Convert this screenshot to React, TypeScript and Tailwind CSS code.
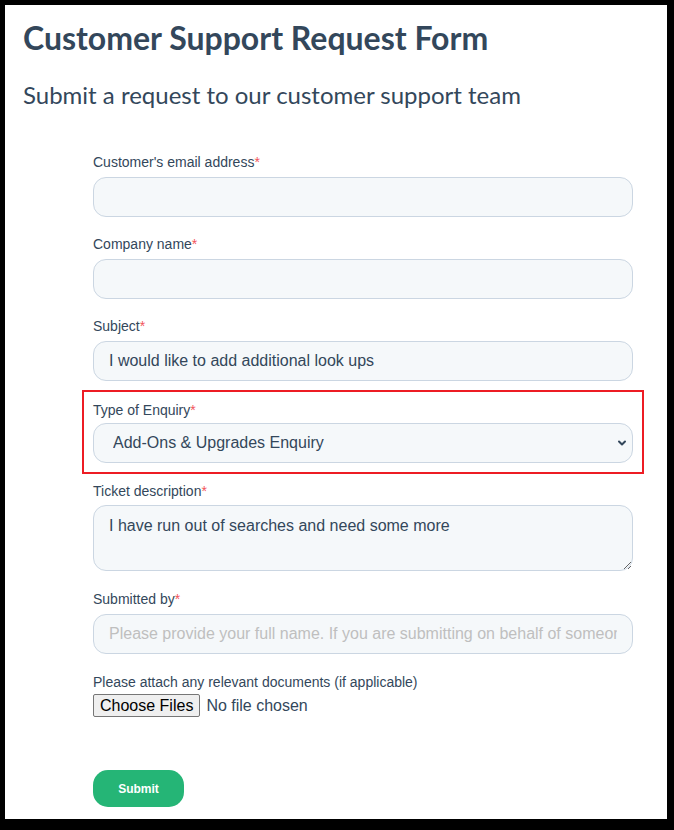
import { ChevronDown } from "lucide-react";

const labelCls = "block text-[14px] leading-[20px] text-[#33475b]";
const inputCls =
  "block w-full h-10 rounded-[13px] border border-[#cbd6e2] bg-[#f5f8fa] px-[15px] text-[16px] text-[#33475b] outline-none placeholder:text-[#bfbfbf]";

function Label({ text, required = true }: { text: string; required?: boolean }) {
  return (
    <label className={labelCls}>
      {text}
      {required && <span className="text-[#f2545b]">*</span>}
    </label>
  );
}

export default function App() {
  return (
    <div
      className="h-[830px] w-[674px] overflow-hidden border-l-[5px] border-t-[5px] border-r-[7px] border-b-[11px] border-black bg-white"
      style={{ fontFamily: '"Liberation Sans", Arial, sans-serif' }}
    >
      {/* Heading */}
      <div className="pl-[18px] pt-[14px] text-[#33475b]" style={{ fontFamily: "Lato, sans-serif" }}>
        <h1 className="text-[32px] font-bold leading-[38px]">Customer Support Request Form</h1>
        <h2 className="mt-[23px] text-[24px] leading-[30px]">Submit a request to our customer support team</h2>
      </div>

      {/* Form */}
      <form className="ml-[88px] mt-[42px] w-[540px]">
        <div className="mb-[17px]">
          <Label text="Customer's email address" />
          <input type="email" className={`${inputCls} mt-[5px]`} />
        </div>

        <div className="mb-[17px]">
          <Label text="Company name" />
          <input type="text" className={`${inputCls} mt-[5px]`} />
        </div>

        <div>
          <Label text="Subject" />
          <input
            type="text"
            defaultValue="I would like to add additional look ups"
            className={`${inputCls} mt-[5px]`}
          />
        </div>

        {/* Highlighted field */}
        <div className="-mx-[11px] mt-[9px] border-2 border-[#ed1c24] px-[9px] pt-[8px] pb-[9px]">
          <Label text="Type of Enquiry" />
          <div className="relative mt-[3px]">
            <select
              defaultValue="addons"
              className={`${inputCls} appearance-none pl-[19px]`}
            >
              <option value="addons">Add-Ons &amp; Upgrades Enquiry</option>
              <option value="billing">Billing Enquiry</option>
              <option value="technical">Technical Support</option>
            </select>
            <ChevronDown
              className="pointer-events-none absolute right-[5px] top-1/2 h-[12px] w-[12px] -translate-y-1/2 text-[#33475b]"
              strokeWidth={4}
            />
          </div>
        </div>

        <div className="mt-[7px] mb-[18px]">
          <Label text="Ticket description" />
          <textarea
            defaultValue="I have run out of searches and need some more"
            className="mt-[4px] block h-[66px] w-full rounded-[13px] border border-[#cbd6e2] bg-[#f5f8fa] px-[15px] pt-[10px] text-[16px] leading-[20px] text-[#33475b] outline-none"
          />
        </div>

        <div className="mb-[18px]">
          <Label text="Submitted by" />
          <input
            type="text"
            placeholder="Please provide your full name. If you are submitting on behalf of someone else, please include their name too"
            className={`${inputCls} mt-[5px]`}
          />
        </div>

        <div>
          <Label text="Please attach any relevant documents (if applicable)" required={false} />
          <div className="mt-[2px] flex items-center gap-[6px] text-[16px] leading-[20px]">
            <button
              type="button"
              className="h-[23px] rounded-[2px] border border-[#767676] bg-[#efefef] px-[6px] text-black"
            >
              Choose Files
            </button>
            <span className="text-[#33475b]">No file chosen</span>
          </div>
        </div>

        <button
          type="button"
          className="mt-[53px] h-[37px] w-[91px] rounded-[15px] bg-[#25b576] text-[12px] font-bold text-white"
        >
          Submit
        </button>
      </form>
    </div>
  );
}
